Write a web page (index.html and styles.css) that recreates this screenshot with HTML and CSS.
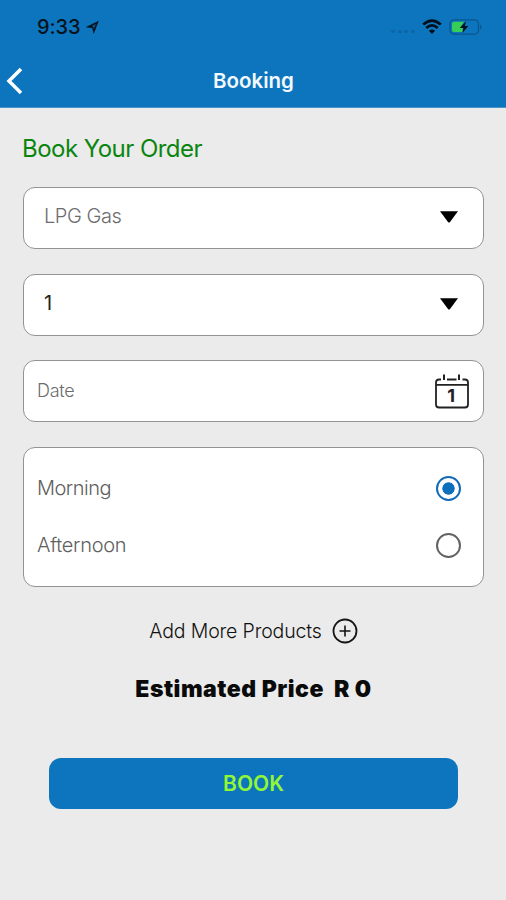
FILE: index.html
```html
<!DOCTYPE html>
<html lang="en">
<head>
<meta charset="utf-8">
<title>Booking</title>
<link rel="stylesheet" href="styles.css">
</head>
<body>
<header class="header">
  <div class="status">
    <span class="time">9:33</span>
    <svg class="location" width="15" height="15" viewBox="0 0 15 15"><path d="M.5 7.2 13.8.7 8.7 14 7.2 7.9Z" fill="#06131d"/><path d="M6.8 6.1 10.8 4 8.9 8.9 8.3 6.7Z" fill="#0b5c98"/></svg>
    <span class="signal"><i></i><i></i><i></i><i></i></span>
    <svg class="wifi" width="20" height="16" viewBox="0 0 20 16" fill="none" stroke="#03101a" stroke-width="2.6"><path d="M1.2 5.5Q10-2.4 18.8 5.5M4.3 9Q10 3.6 15.7 9"/><path d="M6.8 11.8Q10 9 13.2 11.8L10 15Z" fill="#03101a" stroke="none"/></svg>
    <svg class="battery" width="34" height="18" viewBox="0 0 34 18"><rect x="1" y="1.8" width="28.5" height="14.4" rx="4" fill="none" stroke="#0b568d" stroke-width="1.3"/><path d="M31 6.2Q34 9 31 11.8Z" fill="#0b568d"/><path d="M5 3.8H15L11.5 9.5H13.5V14H5Q3 14 3 12V5.8Q3 3.8 5 3.8Z" fill="#35ce59"/><path d="M17 3.3 10.7 10H14.5L13.4 15 19.3 8H15.8Z" fill="#03101a"/></svg>
  </div>
  <div class="nav">
    <svg class="back" width="18" height="28" viewBox="0 0 18 28"><path d="M16 2 4 14 16 26" fill="none" stroke="#fff" stroke-width="3.5"/></svg>
    <h1 class="title">Booking</h1>
  </div>
</header>
<main class="main">
  <h2 class="heading"><span class="heading-text">Book Your Order</span></h2>
  <div class="field select"><span class="product">LPG Gas</span><svg class="caret" width="18" height="12" viewBox="0 0 18 12"><path d="M0 .3H18L10 11Q9 12 8 11Z"/></svg></div>
  <div class="field select"><span class="quantity">1</span><svg class="caret" width="18" height="12" viewBox="0 0 18 12"><path d="M0 .3H18L10 11Q9 12 8 11Z"/></svg></div>
  <div class="field date"><span class="date-label">Date</span>
    <svg class="calendar" width="34" height="36" viewBox="0 0 34 36" fill="none" stroke="#222" stroke-width="1.8"><path d="M6 6.5H4Q1 6.5 1 9.5V31.5Q1 34.5 4 34.5H30Q33 34.5 33 31.5V9.5Q33 6.5 30 6.5H27.5M12 6.5H21.5M1 11.8H33"/><path d="M9 1.5V7M24 1.5V7" stroke-width="2"/><text class="day" x="16.2" y="28.5" text-anchor="middle" fill="#222" stroke="none">1</text></svg>
  </div>
  <div class="slots">
    <div class="slot"><span class="morning">Morning</span><span class="radio checked"></span></div>
    <div class="slot"><span class="afternoon">Afternoon</span><span class="radio"></span></div>
  </div>
  <div class="add"><span class="add-label">Add More Products</span><svg width="26" height="26" viewBox="0 0 26 26" fill="none" stroke="#151515" stroke-width="1.8"><circle cx="13" cy="13" r="11.5"/><path d="M7.5 13H18.5M13 7.5V18.5" stroke-width="1.6"/></svg></div>
  <div class="price"><span class="price-label">Estimated Price</span><span class="amount">R 0</span></div>
  <button class="book"><span class="book-label">BOOK</span></button>
</main>
</body>
</html>
```
FILE: styles.css
```css
* { box-sizing: border-box; }
body { margin: 0; height: 900px; overflow: hidden; background: #ebebeb; font-family: Inter, "Liberation Sans", sans-serif; }
.header { height: 108px; background: #0d75bd; border-bottom: 1px solid #4a94c9; }
.status { height: 54px; display: flex; align-items: center; padding: 0 23px 0 37px; }
.time { font-size: 20px; font-weight: 500; color: #06131d; width: 48px; letter-spacing: -0.1px; white-space: nowrap; }
.location { margin-left: 0; }
.signal { display: flex; gap: 2.7px; margin-left: auto; margin-top: 9px; }
.signal i { width: 4px; height: 3px; border-radius: 50%; background: #0c65a4; }
.wifi { margin-left: 7px; }
.battery { margin-left: 7px; }
.nav { height: 53px; display: grid; grid-template-columns: 30px 1fr 30px; align-items: center; }
.back { margin-left: 5px; }
.title { margin: 0 0 0 1px; text-align: center; font-size: 20.5px; font-weight: 600; color: #f2f8fd; line-height: 26px; }
.main { padding: 26px 22px 0 23px; display: flex; flex-direction: column; }
.heading { margin: 0 0 23px -1px; font-size: 24px; line-height: 30px; font-weight: 400; letter-spacing: -0.53px; color: #0a850f; }
.field { height: 62px; margin-bottom: 24.6px; background: #fff; border: 1px solid #939393; border-radius: 12px; display: flex; align-items: center; justify-content: space-between; }
.select { padding: 0 25px 3px 20px; }
.product { margin-top: -1px; font-size: 20px; font-weight: 300; letter-spacing: -0.45px; color: #6c6c6c; }
.quantity { font-size: 20px; color: #222; }
.caret { margin-top: 1px; }
.date { padding: 0 14px 0 13px; }
.date-label { margin-top: -1px; font-size: 18px; font-weight: 300; letter-spacing: -0.3px; color: #6c6c6c; }
.calendar { margin-top: -1px; }
.day { font: 700 18px Inter, sans-serif; }
.slots { height: 140px; padding: 12px 22px 0 13px; background: #fff; border: 1px solid #939393; border-radius: 12px; }
.slot { height: 57px; display: flex; align-items: center; justify-content: space-between; font-size: 20px; font-weight: 300; color: #606060; }
.morning { letter-spacing: -0.5px; }
.afternoon { letter-spacing: -0.3px; }
.radio { width: 25px; height: 25px; border: 2.4px solid #626262; border-radius: 50%; }
.checked { border-color: #1269b7; background: radial-gradient(circle, #0d70bd 0 5.8px, #fff 6.5px); }
.add { margin: 31px 0 0 0; height: 26px; display: flex; align-items: center; gap: 10px; justify-content: center; font-size: 19.5px; font-weight: 300; color: #111; white-space: nowrap; }
.add-label { letter-spacing: -0.15px; }
.price { height: 30px; margin-top: 30px; display: flex; align-items: center; justify-content: center; gap: 10px; font-size: 23px; font-weight: 900; letter-spacing: 0.5px; color: #0a0a0a; white-space: nowrap; }
.book { margin: 54px 3px 0 26px; width: 409px; height: 51px; border: 0; border-radius: 12px; background: #0d75bd; font: 600 21px Inter, sans-serif; color: #91f735; }
```
